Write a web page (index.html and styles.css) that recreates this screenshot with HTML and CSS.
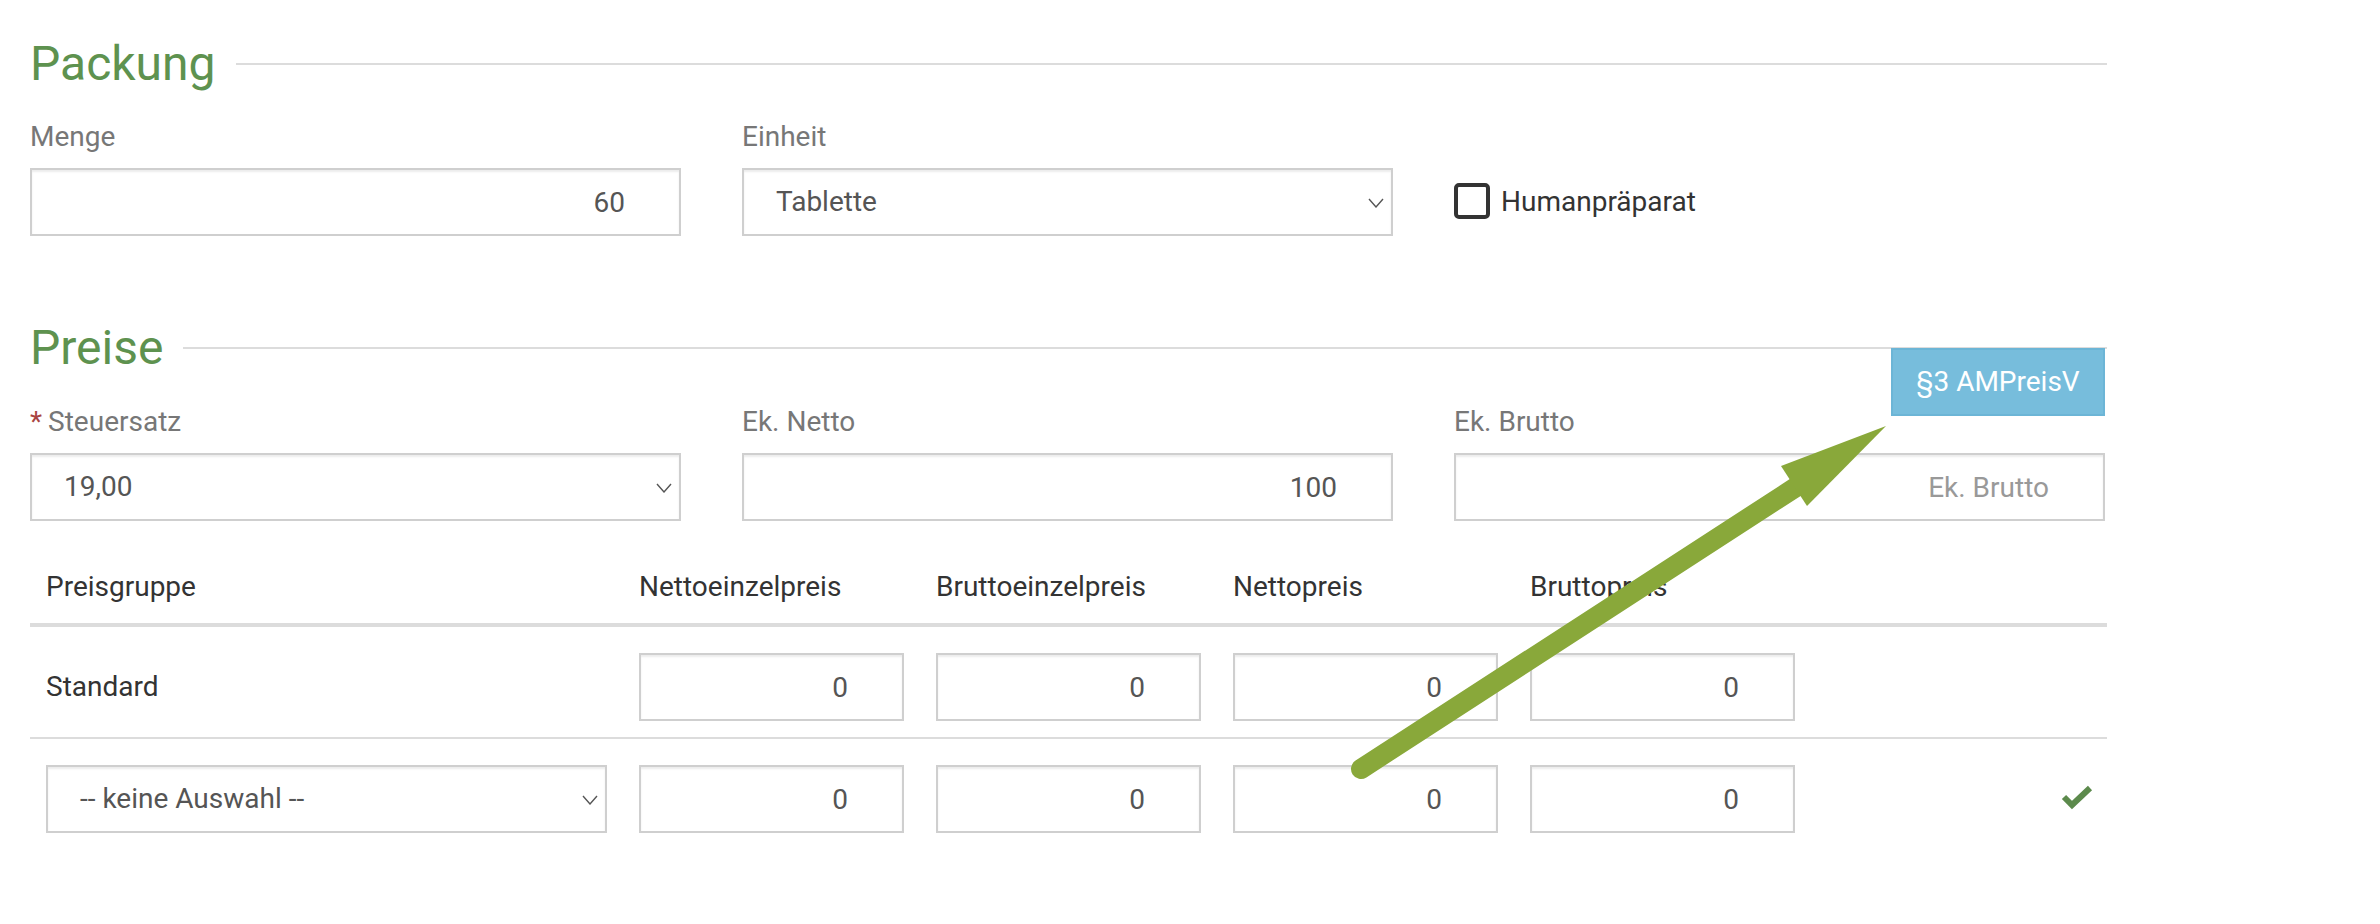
FILE: index.html
```html
<!DOCTYPE html>
<html lang="de">
<head>
<meta charset="utf-8">
<title>Packung / Preise</title>
<link rel="stylesheet" href="styles.css">
</head>
<body>
<div class="page">
  <div class="content">
    <section class="section">
      <h2 class="section-title">Packung</h2>
      <div class="form-row">
        <div class="col">
          <label class="lbl">Menge</label>
          <input class="ctl num" type="text" value="60">
        </div>
        <div class="col">
          <label class="lbl">Einheit</label>
          <div class="ctl select"><span>Tablette</span><svg class="chev" width="16" height="10" viewBox="0 0 16 10"><polyline points="1,1 8,9 15,1" fill="none" stroke="#555" stroke-width="1.4"/></svg></div>
        </div>
        <div class="col">
          <div class="check-row"><span class="checkbox"></span><span class="check-label">Humanpräparat</span></div>
        </div>
      </div>
    </section>

    <section class="section section-prices">
      <h2 class="section-title">Preise</h2>
      <div class="form-row">
        <div class="col">
          <label class="lbl"><span class="req">*</span>Steuersatz</label>
          <div class="ctl select"><span>19,00</span><svg class="chev" width="16" height="10" viewBox="0 0 16 10"><polyline points="1,1 8,9 15,1" fill="none" stroke="#555" stroke-width="1.4"/></svg></div>
        </div>
        <div class="col">
          <label class="lbl">Ek. Netto</label>
          <input class="ctl num" type="text" value="100">
        </div>
        <div class="col col-brutto">
          <button class="btn-info" type="button">§3 AMPreisV</button>
          <label class="lbl">Ek. Brutto</label>
          <input class="ctl num" type="text" placeholder="Ek. Brutto">
        </div>
      </div>

      <table class="price-table">
        <colgroup>
          <col class="c-group"><col class="c-val"><col class="c-val"><col class="c-val"><col class="c-val"><col class="c-act">
        </colgroup>
        <thead>
          <tr>
            <th>Preisgruppe</th>
            <th>Nettoeinzelpreis</th>
            <th>Bruttoeinzelpreis</th>
            <th>Nettopreis</th>
            <th>Bruttopreis</th>
            <th></th>
          </tr>
        </thead>
        <tbody>
          <tr>
            <td class="group-name">Standard</td>
            <td><input class="ctl num" type="text" value="0"></td>
            <td><input class="ctl num" type="text" value="0"></td>
            <td><input class="ctl num" type="text" value="0"></td>
            <td><input class="ctl num" type="text" value="0"></td>
            <td></td>
          </tr>
          <tr class="row-new">
            <td><div class="ctl select select-sm"><span>-- keine Auswahl --</span><svg class="chev" width="16" height="10" viewBox="0 0 16 10"><polyline points="1,1 8,9 15,1" fill="none" stroke="#555" stroke-width="1.4"/></svg></div></td>
            <td><input class="ctl num" type="text" value="0"></td>
            <td><input class="ctl num" type="text" value="0"></td>
            <td><input class="ctl num" type="text" value="0"></td>
            <td><input class="ctl num" type="text" value="0"></td>
            <td class="act"><svg class="ok" width="32" height="26" viewBox="0 0 32 26"><polyline points="3,13 11,21 29,4" fill="none" stroke="#5c8a4c" stroke-width="6" stroke-linejoin="miter" stroke-linecap="butt"/></svg></td>
          </tr>
        </tbody>
      </table>
    </section>
  </div>

  <svg class="annot" width="2380" height="924" viewBox="0 0 2380 924">
    <line x1="1361" y1="769" x2="1796" y2="487" stroke="#89a83a" stroke-width="20" stroke-linecap="round"/>
    <polygon points="1886,426 1781,466 1807,506" fill="#89a83a"/>
  </svg>
</div>
</body>
</html>
```

FILE: styles.css
```css
* { box-sizing: border-box; }

html, body {
  margin: 0;
  padding: 0;
  background: #fff;
}

body {
  font-family: Roboto, "Helvetica Neue", Arial, sans-serif;
  font-size: 28px;
  line-height: 40px;
  color: #333;
}

.page {
  position: relative;
  width: 2380px;
  height: 924px;
  overflow: hidden;
}

.content {
  width: 2077px;
  margin-left: 30px;
  padding-top: 37px;
}

.section-title {
  display: flex;
  align-items: center;
  gap: 20px;
  margin: 0;
  font-size: 48px;
  line-height: 53px;
  font-weight: 400;
  color: #5e924f;
}

.section-title::after {
  content: "";
  flex: 1;
  height: 2px;
  background: #dcdcdc;
}

.form-row {
  display: flex;
  gap: 61px;
  margin-top: 27px;
}

.section-prices {
  margin-top: 85px;
}

.section-prices .form-row {
  margin-top: 28px;
}

.col {
  width: 651px;
  flex: none;
  display: flex;
  flex-direction: column;
}

.col-brutto {
  position: relative;
}

.lbl {
  display: block;
  margin-bottom: 11px;
  font-size: 28px;
  line-height: 40px;
  color: #777;
  font-weight: 400;
}

.req {
  color: #a94442;
  margin-right: 6px;
}

.ctl {
  display: block;
  width: 100%;
  height: 68px;
  margin: 0;
  border: 2px solid #cfcfcf;
  border-radius: 0;
  background: #fff;
  box-shadow: inset 0 2px 2px rgba(0, 0, 0, 0.075);
  font-family: Roboto, "Helvetica Neue", Arial, sans-serif;
  font-size: 28px;
  color: #555;
  outline: none;
}

.num {
  text-align: right;
  padding: 0 54px 0 24px;
}

.num::placeholder {
  color: #999;
}

.select {
  display: flex;
  align-items: center;
  justify-content: space-between;
  padding: 0 7px 0 32px;
}

.select-sm {
  padding-right: 7px;
}

.chev {
  display: block;
  flex: none;
  margin-top: 2px;
}

.check-row {
  margin-top: 51px;
  height: 68px;
  display: flex;
  align-items: center;
  gap: 11px;
}

.checkbox {
  display: block;
  width: 36px;
  height: 36px;
  border: 4px solid #333;
  border-radius: 5px;
  background: #fff;
  margin-top: -2px;
}

.check-label {
  color: #333;
  font-size: 28px;
}

.btn-info {
  position: absolute;
  top: -54px;
  right: 0;
  width: 214px;
  height: 68px;
  padding: 0;
  border: 2px solid #6cb5d6;
  border-radius: 0;
  background: #77bddc;
  color: #fff;
  font-family: Roboto, "Helvetica Neue", Arial, sans-serif;
  font-size: 28px;
  line-height: 1;
}

.price-table {
  width: 2077px;
  margin-top: 30px;
  border-collapse: collapse;
  table-layout: fixed;
}

.c-group { width: 593px; }
.c-val { width: 297px; }
.c-act { width: 296px; }

.price-table th {
  padding: 16px;
  text-align: left;
  font-weight: 400;
  color: #333;
  line-height: 40px;
  border-bottom: 4px solid #dcdcdc;
}

.price-table td {
  padding: 26px 16px 16px;
  vertical-align: middle;
}

.price-table .row-new td {
  border-top: 2px solid #dcdcdc;
}

.group-name {
  color: #333;
}

.act {
  text-align: right;
}

.ok {
  display: inline-block;
  vertical-align: middle;
  margin-right: -2px;
  margin-top: -8px;
}

.annot {
  position: absolute;
  top: 0;
  left: 0;
  pointer-events: none;
}
```
